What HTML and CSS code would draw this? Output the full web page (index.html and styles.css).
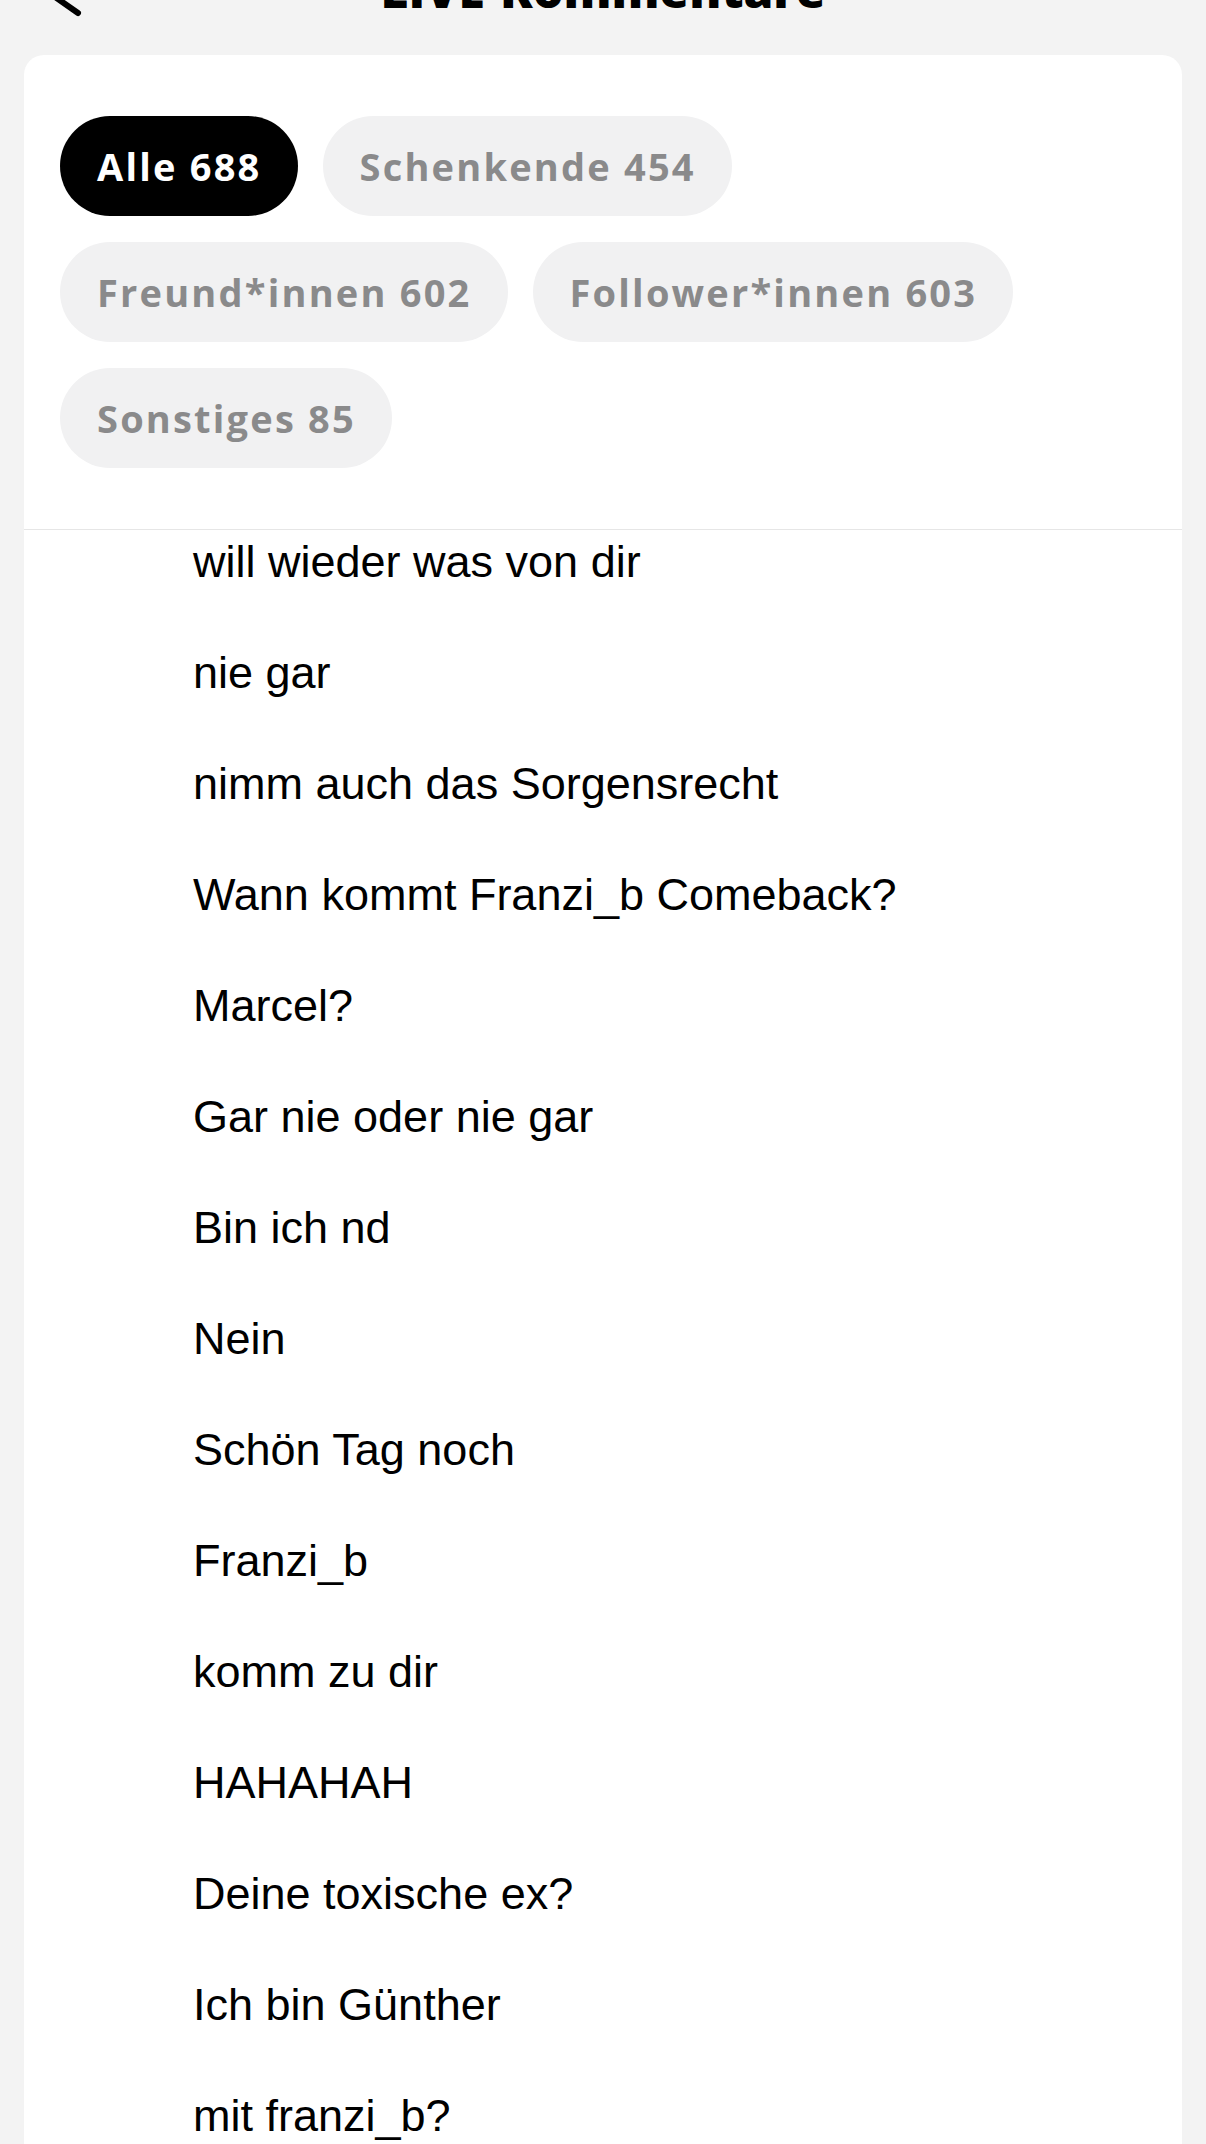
FILE: index.html
```html
<!DOCTYPE html>
<html>
<head>
    <meta charset="utf-8">
    <title>LIVE-Kommentare</title>
    <link rel="stylesheet" href="styles.css">
</head>
<body>
    <header class="top-bar">
        <svg class="back-icon" width="50" height="55" viewBox="0 0 50 55">
            <polyline points="38,5 8,26 38,47" fill="none" stroke="#000" stroke-width="6" stroke-linecap="round" stroke-linejoin="round"/>
        </svg>
        <h1>LIVE-Kommentare</h1>
        <div></div>
    </header>

    <div class="sheet">
        <div class="filters">
            <span class="chip active">Alle 688</span>
            <span class="chip">Schenkende 454</span>
            <span class="chip">Freund*innen 602</span>
            <span class="chip">Follower*innen 603</span>
            <span class="chip">Sonstiges 85</span>
        </div>

        <ul class="comments">
            <li>will wieder was von dir</li>
            <li>nie gar</li>
            <li>nimm auch das Sorgensrecht</li>
            <li>Wann kommt Franzi_b Comeback?</li>
            <li>Marcel?</li>
            <li>Gar nie oder nie gar</li>
            <li>Bin ich nd</li>
            <li>Nein</li>
            <li>Schön Tag noch</li>
            <li>Franzi_b</li>
            <li>komm zu dir</li>
            <li>HAHAHAH</li>
            <li>Deine toxische ex?</li>
            <li>Ich bin Günther</li>
            <li>mit franzi_b?</li>
        </ul>
    </div>
</body>
</html>
```

FILE: styles.css
```css
body {
    margin: 0;
    background: #f3f3f3;
    font-family: 'Liberation Sans', Arial, sans-serif;
    color: #000;
    height: 2144px;
    overflow: hidden;
}

.top-bar {
    display: grid;
    grid-template-columns: 1fr auto 1fr;
    height: 89px;
    margin-top: -34px;
}

.back-icon {
    align-self: start;
    margin-left: 40px;
}

.top-bar h1 {
    margin: 0;
    font-family: 'Open Sans', sans-serif;
    font-weight: 800;
    font-size: 48px;
    line-height: 48px;
}

.sheet {
    background: #fff;
    margin: 0 24px;
    border-radius: 20px 20px 0 0;
    min-height: 2200px;
}

.filters {
    display: flex;
    flex-wrap: wrap;
    gap: 26px 25px;
    padding: 61px 36px 61px 36px;
    border-bottom: 1px solid #e6e6e6;
}

.chip {
    height: 100px;
    padding: 0 36px 0 37px;
    border-radius: 50px;
    background: #f1f1f2;
    color: #8a8a8b;
    font-family: 'Open Sans', sans-serif;
    font-weight: 700;
    font-size: 38px;
    letter-spacing: 2.2px;
    display: flex;
    align-items: center;
    box-sizing: border-box;
}

.chip.active {
    background: #000;
    color: #fff;
}

.comments {
    list-style: none;
    margin: 0;
    padding: 0 0 0 169px;
    display: flex;
    flex-direction: column;
    gap: 47px;
}

.comments li {
    font-size: 45px;
    line-height: 64px;
}
```
